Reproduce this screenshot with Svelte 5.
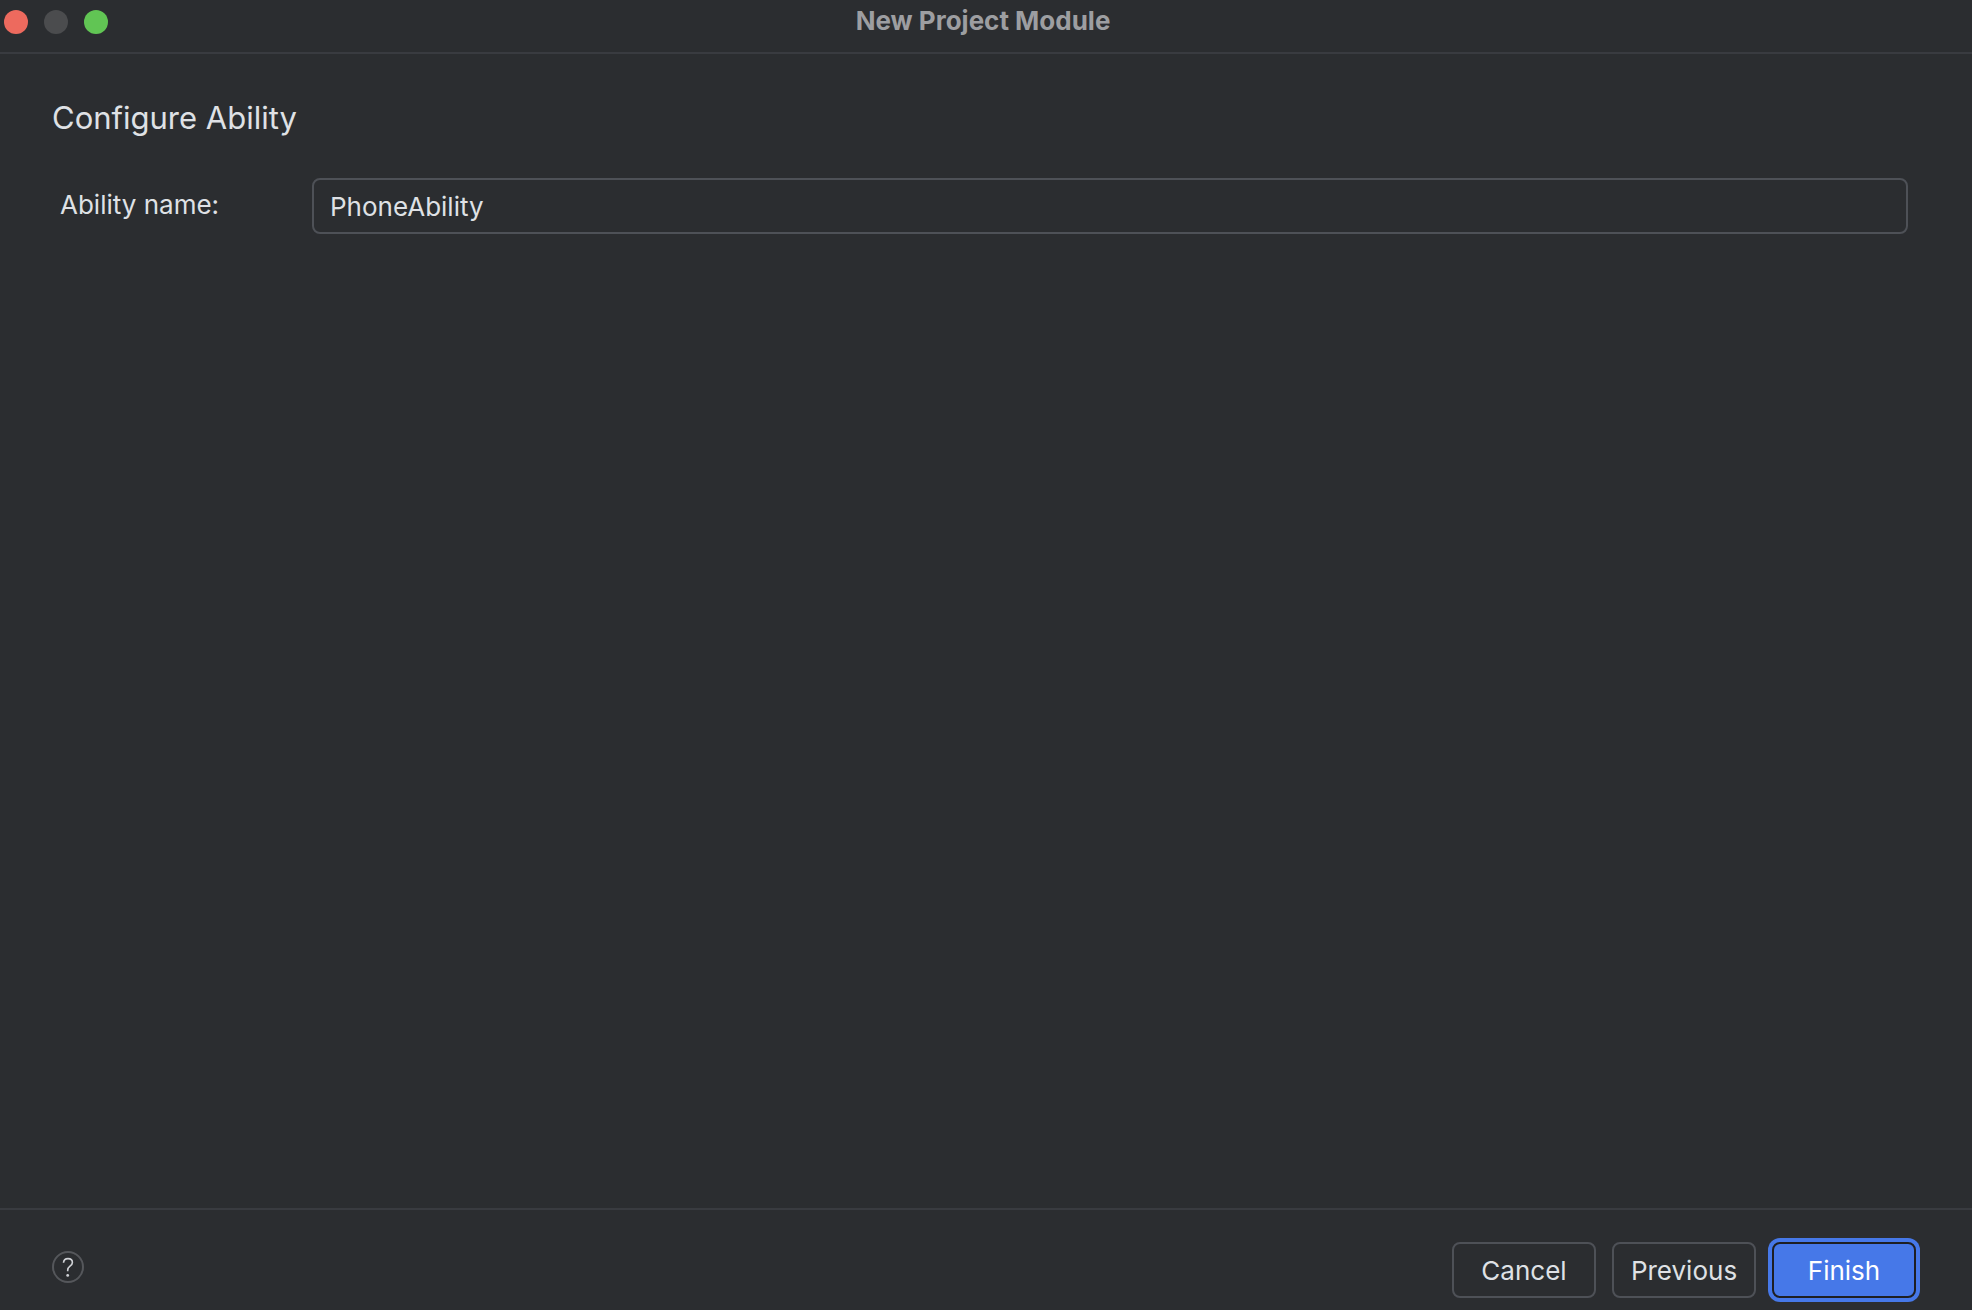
<script>
    let abilityName = "PhoneAbility";
</script>

<div class="window">
    <header>
        <div class="lights">
            <button class="light close" aria-label="Close"></button>
            <button class="light minimize" aria-label="Minimize" disabled></button>
            <button class="light zoom" aria-label="Zoom"></button>
        </div>
        <span class="title">New Project Module</span>
    </header>

    <main>
        <h1>Configure Ability</h1>
        <div class="field">
            <label for="ability-name">Ability name:</label>
            <input id="ability-name" type="text" spellcheck="false" bind:value={abilityName} />
        </div>
    </main>

    <footer>
        <button class="help" aria-label="Help">
            <svg viewBox="0 0 32 32" width="32" height="32" fill="none">
                <circle cx="16" cy="16" r="15" stroke="#55575b" stroke-width="2" />
                <path
                    d="M11.5 11.7C11.7 9.1 13.4 7.6 16 7.6C18.7 7.6 20.4 9.2 20.4 11.4C20.4 13 19.6 14 18 15.2C16.4 16.4 15.7 17.4 15.7 19.2V20.2"
                    stroke="#d0d2d6"
                    stroke-width="1.6"
                />
                <circle cx="15.7" cy="24.4" r="1.4" fill="#d0d2d6" />
            </svg>
        </button>
        <div class="actions">
            <button class="btn">Cancel</button>
            <button class="btn">Previous</button>
            <button class="btn primary">Finish</button>
        </div>
    </footer>
</div>

<style>
    :global(body) {
        background: #2b2d30;
    }

    .window {
        display: flex;
        flex-direction: column;
        box-sizing: border-box;
        min-height: 100vh;
        background: #2b2d30;
        color: #dfe1e5;
        font-family: Inter, "Liberation Sans", sans-serif;
        font-size: 26px;
        line-height: 32px;
    }

    header {
        display: grid;
        grid-template-columns: 1fr auto 1fr;
        padding: 5px 10px 15px 4px;
        border-bottom: 2px solid #393b40;
    }

    .lights {
        display: flex;
        gap: 16px;
        padding-top: 5px;
    }

    .light {
        width: 24px;
        height: 24px;
        padding: 0;
        border: none;
        border-radius: 50%;
    }

    .close {
        background: #ed6a5e;
    }

    .minimize {
        background: #4b4c4e;
    }

    .zoom {
        background: #61c554;
    }

    .title {
        color: #9d9ea1;
        font-weight: 700;
    }

    main {
        flex: 1;
        padding: 44px 64px 0 52px;
    }

    h1 {
        margin: 0 0 40px;
        font-size: 31px;
        font-weight: 400;
        line-height: 40px;
    }

    .field {
        display: flex;
        align-items: center;
        padding-left: 8px;
    }

    label {
        width: 252px;
        padding-bottom: 2px;
    }

    input {
        flex: 1;
        box-sizing: border-box;
        height: 56px;
        padding: 0 16px;
        border: 2px solid #4e5157;
        border-radius: 8px;
        background: transparent;
        color: inherit;
        font: inherit;
        outline: none;
    }

    footer {
        display: flex;
        align-items: center;
        justify-content: space-between;
        padding: 32px 56px 12px 52px;
        border-top: 2px solid #393b40;
    }

    .help {
        display: flex;
        padding: 0 0 6px;
        border: none;
        background: none;
    }

    .actions {
        display: flex;
        gap: 16px;
    }

    .btn {
        box-sizing: border-box;
        min-width: 144px;
        height: 56px;
        padding: 2px 16px 0;
        border: 2px solid #4e5157;
        border-radius: 8px;
        background: transparent;
        color: inherit;
        font: inherit;
    }

    .primary {
        border-color: #1e1f22;
        background: #4678e8;
        color: #fff;
        box-shadow: 0 0 0 4px #4678e8;
    }
</style>
